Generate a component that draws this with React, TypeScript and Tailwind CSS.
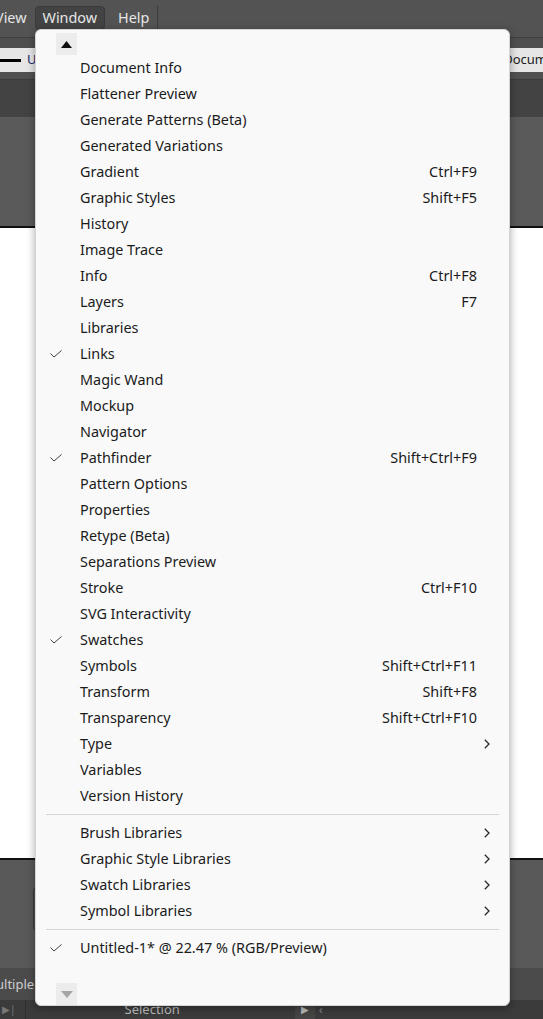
import React from 'react';

type Item = {
  label: string;
  shortcut?: string;
  checked?: boolean;
  submenu?: boolean;
};

const mainItems: Item[] = [
  { label: 'Document Info' },
  { label: 'Flattener Preview' },
  { label: 'Generate Patterns (Beta)' },
  { label: 'Generated Variations' },
  { label: 'Gradient', shortcut: 'Ctrl+F9' },
  { label: 'Graphic Styles', shortcut: 'Shift+F5' },
  { label: 'History' },
  { label: 'Image Trace' },
  { label: 'Info', shortcut: 'Ctrl+F8' },
  { label: 'Layers', shortcut: 'F7' },
  { label: 'Libraries' },
  { label: 'Links', checked: true },
  { label: 'Magic Wand' },
  { label: 'Mockup' },
  { label: 'Navigator' },
  { label: 'Pathfinder', shortcut: 'Shift+Ctrl+F9', checked: true },
  { label: 'Pattern Options' },
  { label: 'Properties' },
  { label: 'Retype (Beta)' },
  { label: 'Separations Preview' },
  { label: 'Stroke', shortcut: 'Ctrl+F10' },
  { label: 'SVG Interactivity' },
  { label: 'Swatches', checked: true },
  { label: 'Symbols', shortcut: 'Shift+Ctrl+F11' },
  { label: 'Transform', shortcut: 'Shift+F8' },
  { label: 'Transparency', shortcut: 'Shift+Ctrl+F10' },
  { label: 'Type', submenu: true },
  { label: 'Variables' },
  { label: 'Version History' },
];

const libraryItems: Item[] = [
  { label: 'Brush Libraries', submenu: true },
  { label: 'Graphic Style Libraries', submenu: true },
  { label: 'Swatch Libraries', submenu: true },
  { label: 'Symbol Libraries', submenu: true },
];

const Check = () => (
  <svg width="12" height="8" viewBox="0 0 12 8" className="ml-[14px] mt-[1px]">
    <polyline points="0.5,3.5 4,7 11.5,0.5" fill="none" stroke="#444" strokeWidth="1" />
  </svg>
);

const Chevron = () => (
  <svg width="6" height="10" viewBox="0 0 6 10" className="ml-auto mt-[1px]">
    <polyline points="0.8,0.8 5,5 0.8,9.2" fill="none" stroke="#2a2a2a" strokeWidth="1.3" />
  </svg>
);

const MenuRow = ({ item }: { item: Item }) => (
  <div className="flex h-[26px] items-center pb-[1px] pr-[19px] text-[14.4px] text-[#1b1b1b]">
    <div className="flex w-[44px] shrink-0 items-center">{item.checked && <Check />}</div>
    <span className="whitespace-nowrap">{item.label}</span>
    {item.shortcut && <span className="ml-auto mr-[13px] whitespace-nowrap">{item.shortcut}</span>}
    {item.submenu && <Chevron />}
  </div>
);

const Separator = () => (
  <div className="flex h-[11px] items-center px-[10px]">
    <div className="h-px w-full bg-[#d6d6d6]" />
  </div>
);

export default function App() {
  return (
    <div
      className="relative h-[1019px] w-[543px] overflow-hidden bg-[#535353]"
      style={{ fontFamily: '"Noto Sans", "Open Sans", sans-serif' }}
    >
      {/* application chrome behind the menu */}
      <div className="flex h-full flex-col">
        <div className="flex h-[37px] items-center pb-[1px] text-[14.4px] text-[#e6e6e6]">
          <span className="-ml-[5px] mr-[8px]">View</span>
          <span className="rounded-sm border border-[#3a3a3a] bg-[#434343] px-[7px]">Window</span>
          <span className="ml-[13px]">Help</span>
          <div className="ml-[8px] h-[26px] w-px bg-[#3d3d3d]" />
        </div>
        <div className="h-px bg-[#3f3f3f]" />
        <div className="h-[10px] bg-[#4f4f4f]" />
        <div className="flex h-[24px] items-center justify-between bg-[#e6e6e6] text-[13px] text-[#1a1a1a]">
          <div className="flex items-center">
            <div className="h-[3px] w-[21px] bg-black" />
            <span className="ml-[6px] text-[#1a2a6a]">U</span>
          </div>
          <span className="-mr-[24px]">Document</span>
        </div>
        <div className="h-[8px] border-b border-[#3b3b3b] bg-[#505050]" />
        <div className="h-[37px] bg-[#434343]" />
        <div className="h-[109px] bg-[#5a5a5a]" />
        <div className="h-[2px] bg-[#111]" />
        <div className="flex-1 bg-white" />
        <div className="h-[2px] bg-[#111]" />
        <div className="h-[108px] bg-[#595959] px-[33px] pt-[27px]">
          <div className="h-[44px] rounded-[4px] border border-[#3a3a3a] bg-[#555]" />
        </div>
        <div className="flex h-[32px] items-center pt-[1px] bg-[#4b4b4b] text-[13px] text-[#cfcfcf]">
          <span className="-ml-[4px]">ultiple c</span>
        </div>
        <div className="flex h-[19px] items-center bg-[#3b3b3b] text-[13px] text-[#bdbdbd]">
          <span className="ml-[2px] text-[10px] text-[#777]">▶|</span>
          <div className="ml-[9px] h-full w-px bg-[#2e2e2e]" />
          <span className="ml-[99px]">Selection</span>
          <div className="ml-[115px] flex h-full w-[20px] items-center justify-center bg-[#454545] text-[10px] text-[#bbb]">▶</div>
          <span className="ml-[4px] text-[#888]">‹</span>
        </div>
      </div>

      {/* Window dropdown */}
      <div className="absolute left-[35px] top-[29px] flex h-[977px] w-[475px] flex-col rounded-[6px] border border-[#d4d4d4] bg-[#f9f9f9] pt-[3px] shadow-[0_2px_8px_rgba(0,0,0,0.35)]">
        <div className="ml-[20px] flex h-[22px] w-[21px] items-center justify-center bg-[#ececec]">
          <svg width="11" height="7" viewBox="0 0 11 7">
            <polygon points="5.5,0 11,7 0,7" fill="#111" />
          </svg>
        </div>
        {mainItems.map((item) => (
          <MenuRow key={item.label} item={item} />
        ))}
        <Separator />
        {libraryItems.map((item) => (
          <MenuRow key={item.label} item={item} />
        ))}
        <Separator />
        <MenuRow item={{ label: 'Untitled-1* @ 22.47 % (RGB/Preview)', checked: true }} />
        <div className="ml-[20px] mt-[22px] flex h-[22px] w-[21px] items-center justify-center bg-[#ececec]">
          <svg width="12" height="7" viewBox="0 0 12 7">
            <polygon points="0,0 12,0 6,7" fill="#a5a5a5" />
          </svg>
        </div>
      </div>
    </div>
  );
}
